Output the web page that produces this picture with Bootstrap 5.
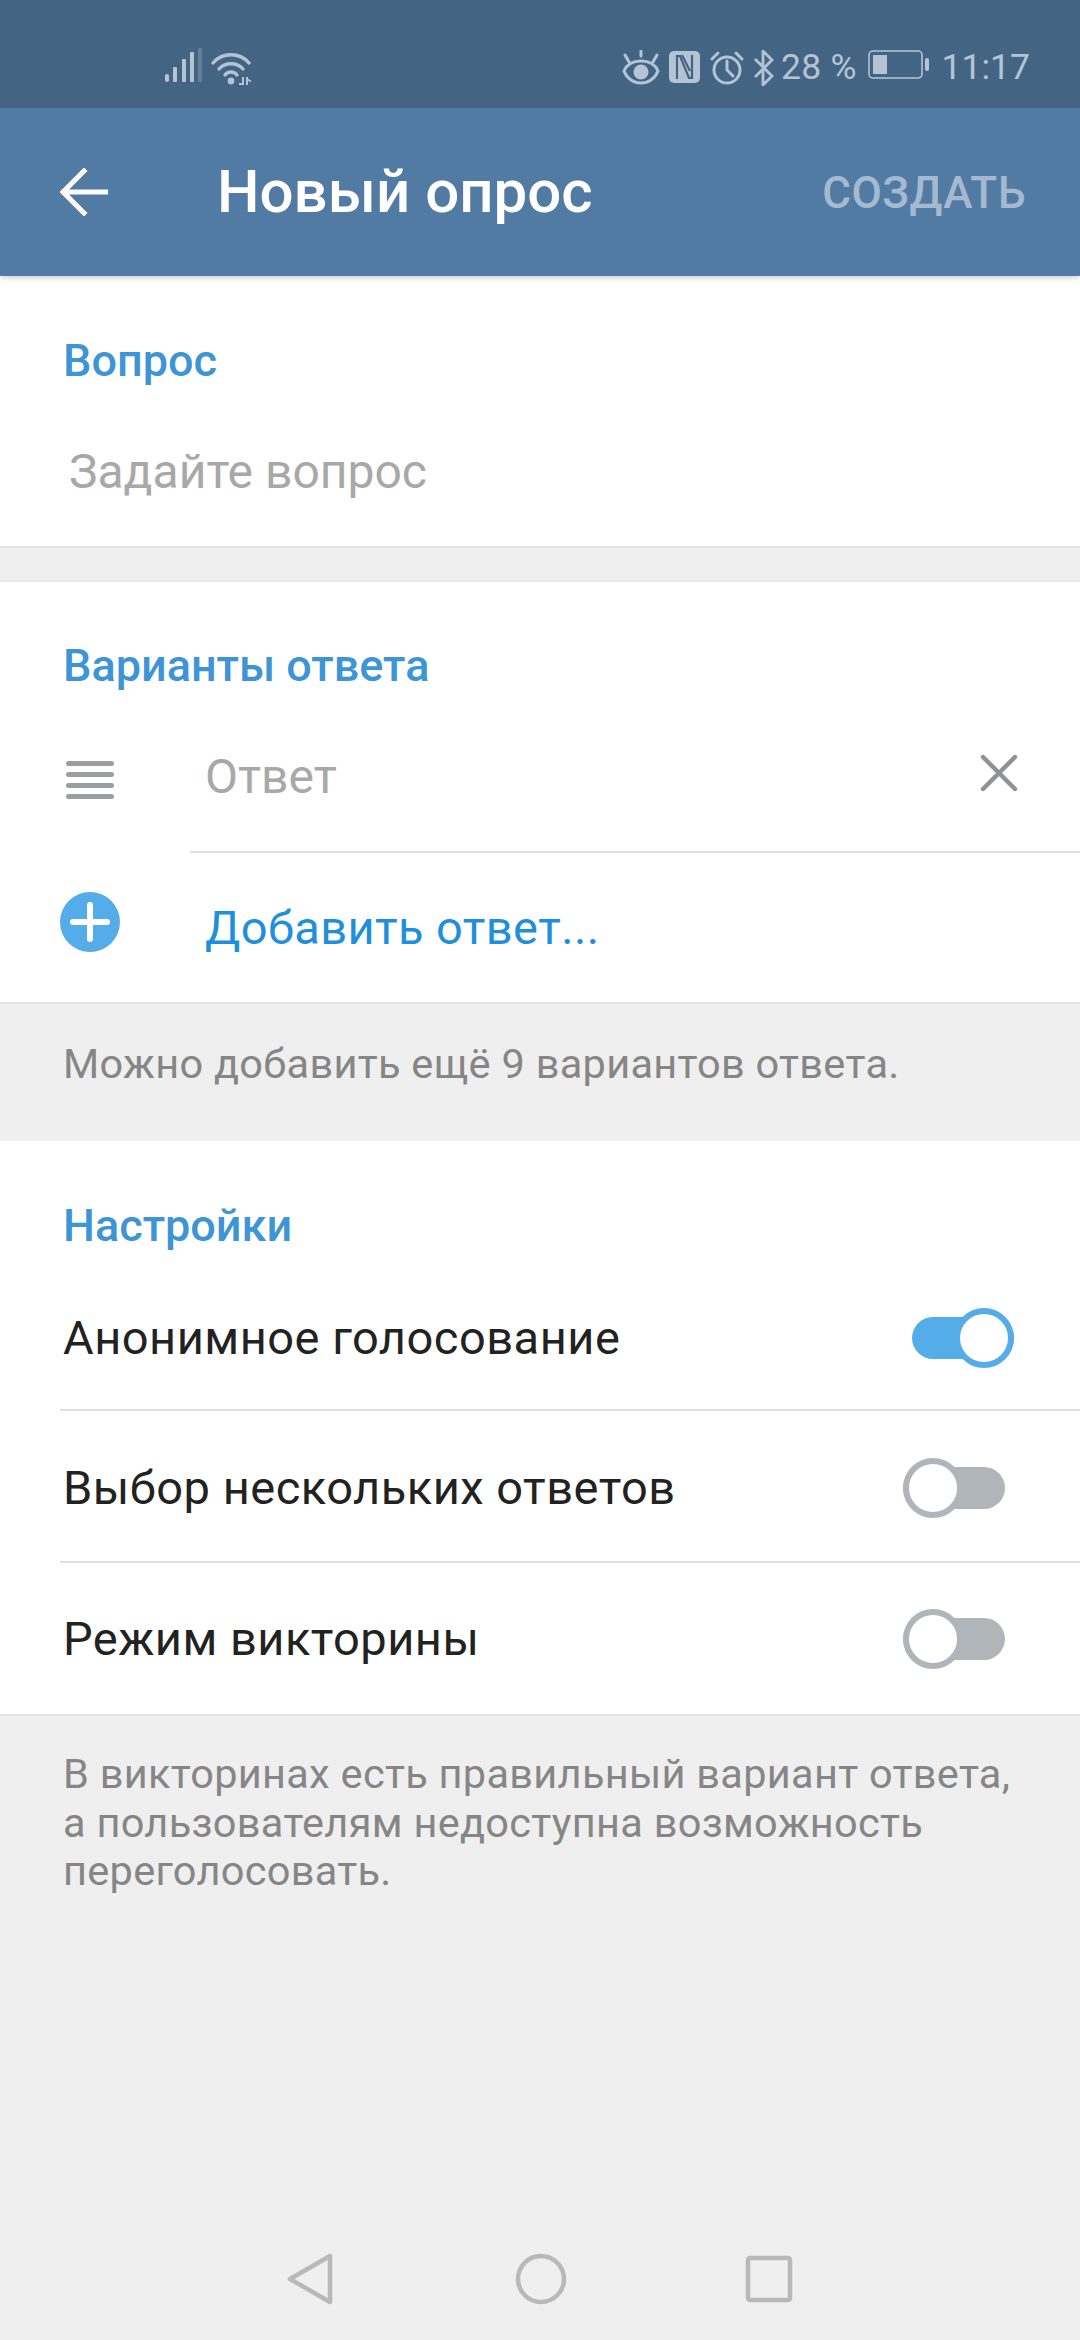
<!DOCTYPE html>
<html lang="ru">
<head>
  <meta charset="UTF-8">
  <meta name="viewport" content="width=device-width, initial-scale=1.0">
  <title>Новый опрос</title>
  <link href="https://cdn.jsdelivr.net/npm/bootstrap@5.3.0/dist/css/bootstrap.min.css" rel="stylesheet">
  <style>
    body {
      font-family: Roboto, "Liberation Sans", sans-serif;
      background: #efefef;
      color: #222;
      width: 1080px;
      height: 2340px;
      overflow: hidden;
    }
    .screen { height: 2340px; }
    .status-strip {
      height: 108px;
      background: #446484;
      color: #b5c4d4;
      padding: 50px 50px 0 165px;
      font-size: 35.5px;
      line-height: 35px;
    }
    .status-strip svg { display: block; }
    .status-strip .signal-icon { margin-top: -2px; }
    .status-strip .pct { margin: 0 11px 0 6px; letter-spacing: .2px; }
    .status-strip .clock { margin-left: 12px; }
    .app-head {
      height: 168px;
      background: #527ba3;
      box-shadow: 0 2px 5px rgba(0,0,0,.18);
      position: relative;
      padding: 0 54px 0 60px;
    }
    .app-title { font-size: 60px; font-weight: 500; color: #fff; margin-left: 109px; }
    .create-btn { font-size: 44px; font-weight: 500; color: #a5bad0; letter-spacing: .5px; margin-top: 2px; }
    .block { background: #fff; border-bottom: 2px solid #e3e3e3; }
    .sect-title { font-size: 45px; font-weight: 500; color: #3d95d5; line-height: 50px; padding-left: 63px; }
    .q-block { height: 272px; padding-top: 60px; }
    .q-hint { font-size: 48px; color: #a8a8a8; padding: 58px 0 0 69px; line-height: 56px; }
    .a-block { height: 424px; margin-top: 32px; padding-top: 59px; border-top: 2px solid #e8e8e8; }
    .answer-row { height: 162px; }
    .answer-main { flex: 1; height: 100%; border-bottom: 2px solid #dfdfdf; padding: 12px 62px 0 15px; }
    .grip-slot { width: 190px; padding: 16px 0 0 66px; }
    .answer-hint { font-size: 48px; color: #a8a8a8; }
    .clear-icon { margin-top: -8px; }
    .add-row { height: 150px; }
    .plus-slot { width: 205px; padding: 0 0 12px 60px; }
    .add-text { font-size: 47px; color: #1d8fdc; letter-spacing: .4px; }
    .note-text { font-size: 41.5px; color: #868686; padding: 0 63px; letter-spacing: .3px; line-height: 48.5px; }
    .note-short { height: 137px; padding-top: 36px; }
    .set-block { height: 575px; padding-top: 60px; }
    .set-row { height: 152px; margin-left: 60px; padding: 4px 75px 0 3px; border-bottom: 2px solid #dfdfdf; font-size: 47px; letter-spacing: .5px; }
    .set-row.first-row { height: 160px; padding-top: 16px; }
    .set-row:last-child { border-bottom: 0; padding-top: 0; }
    .sw {
      width: 102px;
      height: 60px;
      position: relative;
      display: block;
    }
    .sw::before {
      content: "";
      position: absolute;
      left: 0;
      right: 0;
      top: 9px;
      height: 42px;
      border-radius: 21px;
      background: #b0b5b9;
    }
    .sw::after {
      content: "";
      position: absolute;
      left: 0;
      top: 0;
      width: 60px;
      height: 60px;
      border-radius: 50%;
      background: #fff;
      border: 6px solid #b0b5b9;
    }
    .sw.sw-on { margin-right: -9px; }
    .sw.sw-on::before { background: #54ade8; }
    .sw.sw-on::after { left: auto; right: 0; border-color: #54ade8; }
    .note-long { padding-top: 34px; }
    .soft-nav { margin-top: auto; height: 87px; }
    .soft-nav svg + svg { margin-left: 178px; }
  </style>
</head>
<body>
<div class="screen d-flex flex-column">

  <div class="status-strip d-flex align-items-start">
    <!-- signal + wifi -->
    <svg class="signal-icon" width="38" height="36" viewBox="0 0 38 36" fill="currentColor">
      <rect x="0" y="26" width="4" height="8" rx="2"/>
      <rect x="8" y="19" width="4" height="15" rx="1"/>
      <rect x="17" y="11" width="4" height="23" rx="1"/>
      <rect x="25" y="4" width="4" height="30" rx="1"/>
      <rect x="33" y="0" width="4" height="34" rx="1" opacity=".3"/>
    </svg>
    <svg class="ms-2" width="42" height="36" viewBox="0 0 42 36" fill="none" stroke="currentColor" stroke-width="3.4" stroke-linecap="round">
      <path d="M2 13C11 2 29 2 38 13"/>
      <path d="M8 19C14 12 26 12 32 19"/>
      <path d="M14 25C17 21 23 21 26 25"/>
      <circle cx="20" cy="31" r="3.4" fill="currentColor" stroke="none"/>
      <path d="M28 34H33M32 27V35M36 27V35M36 29L40 31.5" stroke-width="2" stroke-linecap="butt"/>
    </svg>
    <!-- eye, nfc, alarm, bluetooth -->
    <svg class="ms-auto" width="38" height="36" viewBox="0 0 38 36" fill="none" stroke="currentColor" stroke-width="3">
      <path d="M19 1V6M3 5L7 12M35 5L31 12" stroke-linecap="round"/>
      <path d="M2 21C5 14 12 11 19 11S33 14 36 21C33 29 26 33 19 33S5 29 2 21Z"/>
      <circle cx="19" cy="22" r="7.5" fill="currentColor" stroke="none"/>
    </svg>
    <svg class="ms-2" width="33" height="34" viewBox="0 0 33 34">
      <rect x="1" y="1" width="31" height="32" rx="5" fill="currentColor"/>
      <path d="M9 5V29M24 5V29M9 6H12L21 28H24M14 5L22 21" fill="none" stroke="#446484" stroke-width="2.2"/>
    </svg>
    <svg class="ms-2" width="36" height="36" viewBox="0 0 36 36" fill="none" stroke="currentColor" stroke-width="3">
      <circle cx="18" cy="20" r="13"/>
      <path d="M18 11V20L24 26M3 9L9 3M33 9L27 3" stroke-linecap="round"/>
    </svg>
    <svg class="ms-2" width="22" height="36" viewBox="0 0 22 36" fill="none" stroke="currentColor" stroke-width="2.8">
      <path d="M2 9L19 26L10 35V1L19 10L2 27"/>
    </svg>
    <span class="pct">28 %</span>
    <svg width="62" height="30" viewBox="0 0 62 30">
      <rect x="1" y="1" width="53" height="27" rx="4" fill="none" stroke="currentColor" stroke-width="1.6"/>
      <rect x="5" y="5" width="14" height="19" fill="currentColor"/>
      <rect x="57" y="8" width="4" height="13" rx="2" fill="currentColor"/>
    </svg>
    <span class="clock">11:17</span>
  </div>

  <div class="app-head d-flex align-items-center">
    <svg width="48" height="48" viewBox="0 0 48 48" fill="none" stroke="#fff" stroke-width="5" stroke-linecap="square">
      <path d="M46 24H4M24 3L3 24L24 45"/>
    </svg>
    <div class="app-title">Новый опрос</div>
    <div class="create-btn ms-auto">СОЗДАТЬ</div>
  </div>

  <div class="block q-block">
    <div class="sect-title">Вопрос</div>
    <div class="q-hint">Задайте вопрос</div>
  </div>

  <div class="block a-block">
    <div class="sect-title">Варианты ответа</div>
    <div class="answer-row d-flex align-items-center">
      <div class="grip-slot flex-shrink-0">
        <svg class="d-block" width="48" height="40" viewBox="0 0 48 40" fill="#9b9da1">
          <rect y="1" width="48" height="5" rx="2.5"/>
          <rect y="12" width="48" height="5" rx="2.5"/>
          <rect y="23" width="48" height="5" rx="2.5"/>
          <rect y="34" width="48" height="5" rx="2.5"/>
        </svg>
      </div>
      <div class="answer-main d-flex align-items-center justify-content-between">
        <span class="answer-hint">Ответ</span>
        <svg class="clear-icon" width="38" height="38" viewBox="0 0 38 38" stroke="#8f9194" stroke-width="4.4" stroke-linecap="round">
          <path d="M3 3L35 35M35 3L3 35"/>
        </svg>
      </div>
    </div>
    <div class="add-row d-flex align-items-center">
      <div class="plus-slot flex-shrink-0">
        <svg class="d-block" width="60" height="60" viewBox="0 0 60 60">
          <circle cx="30" cy="30" r="30" fill="#54ade8"/>
          <path d="M13 30H47M30 13V47" stroke="#fff" stroke-width="6" stroke-linecap="round"/>
        </svg>
      </div>
      <span class="add-text">Добавить ответ...</span>
    </div>
  </div>

  <div class="note-text note-short">Можно добавить ещё 9 вариантов ответа.</div>

  <div class="block set-block">
    <div class="sect-title">Настройки</div>
    <div class="set-row first-row d-flex align-items-center justify-content-between">
      <span>Анонимное голосование</span>
      <span class="sw sw-on"></span>
    </div>
    <div class="set-row d-flex align-items-center justify-content-between">
      <span>Выбор нескольких ответов</span>
      <span class="sw"></span>
    </div>
    <div class="set-row d-flex align-items-center justify-content-between">
      <span>Режим викторины</span>
      <span class="sw"></span>
    </div>
  </div>

  <div class="note-text note-long">В викторинах есть правильный вариант ответа,<br>а пользователям недоступна возможность<br>переголосовать.</div>

  <div class="soft-nav d-flex justify-content-center align-items-start">
    <svg width="50" height="52" viewBox="0 0 50 52" fill="none" stroke="#b9b9b9" stroke-width="4.5" stroke-linejoin="round">
      <path d="M43 3V49L3 26Z"/>
    </svg>
    <svg width="52" height="52" viewBox="0 0 52 52" fill="none" stroke="#b9b9b9" stroke-width="4.5">
      <circle cx="26" cy="26" r="23"/>
    </svg>
    <svg width="48" height="52" viewBox="0 0 48 52" fill="none" stroke="#b9b9b9" stroke-width="4.5">
      <rect x="3" y="5" width="42" height="42" rx="2"/>
    </svg>
  </div>
</div>
<script src="https://cdn.jsdelivr.net/npm/bootstrap@5.3.0/dist/js/bootstrap.bundle.min.js"></script>
</body>
</html>
